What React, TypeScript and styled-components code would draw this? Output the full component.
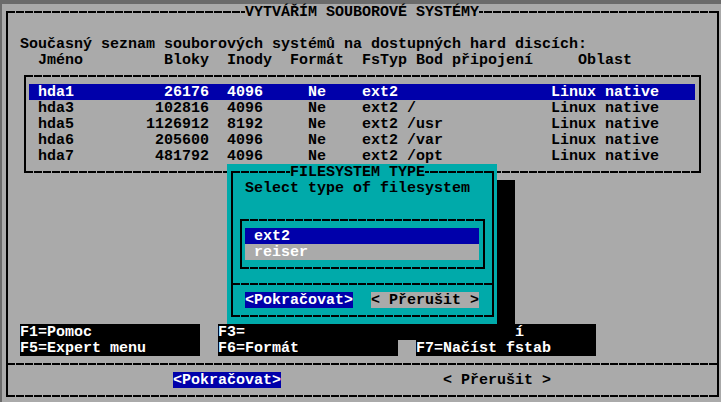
import React from "react";
import styled, { createGlobalStyle, css } from "styled-components";

const GlobalStyle = createGlobalStyle`
  html, body { margin: 0; padding: 0; background: #6b6b6b; overflow: hidden; }
  #root { width: 721px; height: 402px; overflow: hidden; }
`;

type Pos = { $c: number; $r: number; $w?: number; $h?: number };

const placed = css<Pos>`
  position: relative;
  grid-column: ${(p) => p.$c + 1} / span ${(p) => p.$w ?? 1};
  grid-row: ${(p) => p.$r + 1} / span ${(p) => p.$h ?? 1};
`;

const subgrid = css<Pos>`
  display: grid;
  grid-template-columns: repeat(${(p) => p.$w ?? 1}, 9px);
  grid-template-rows: repeat(${(p) => p.$h ?? 1}, 16px);
`;

const dash = "repeating-linear-gradient(90deg, transparent 0 1px, #000 1px 9px)";
const solid = "linear-gradient(#000, #000)";

const boxLines = css`
  &::before {
    content: "";
    position: absolute;
    top: 7px;
    bottom: 7px;
    left: 4px;
    right: 3px;
    pointer-events: none;
    background:
      ${solid} left top / 2px 100% no-repeat,
      ${solid} right top / 2px 100% no-repeat,
      ${dash} left top / 100% 2px no-repeat,
      ${dash} left bottom / 100% 2px no-repeat;
  }
`;

const Viewport = styled.main`
  width: 721px;
  height: 402px;
  box-sizing: border-box;
  padding: 4px 0 0 2px;
  overflow: hidden;
  background: #6b6b6b;
`;

const Screen = styled.div`
  position: relative;
  display: grid;
  grid-template-columns: repeat(80, 9px);
  grid-template-rows: repeat(25, 16px);
  width: 720px;
  height: 400px;
  background: #aaaaaa;
  color: #000;
  font-family: "Liberation Mono", "DejaVu Sans Mono", monospace;
  font-weight: 700;
  font-size: 15px;
  line-height: 18px;
  white-space: pre;
  ${boxLines}
`;

const Heading = styled.h1<Pos>`
  ${placed}
  margin: 0;
  font: inherit;
  background: inherit;
`;

const Caption = styled.div<Pos & { $light?: boolean }>`
  ${placed}
  color: ${(p) => (p.$light ? "#ffffff" : "#000000")};
`;

const ListBox = styled.div<Pos>`
  ${placed}
  ${subgrid}
  ${boxLines}
`;

const TableRow = styled.div<Pos & { $selected?: boolean }>`
  ${placed}
  display: grid;
  grid-template-columns: 108px 63px 81px 72px 45px 144px 144px;
  padding-left: 9px;
  background: ${(p) => (p.$selected ? "#0000aa" : "transparent")};
  color: ${(p) => (p.$selected ? "#ffffff" : "#000000")};
`;

const Field = styled.span<{ $right?: boolean; $pad?: number }>`
  display: block;
  text-align: ${(p) => (p.$right ? "right" : "left")};
  padding-left: ${(p) => (p.$pad ?? 0) * 9}px;
  overflow: visible;
`;

const Rule = styled.div<Pos>`
  ${placed}
  &::before {
    content: "";
    position: absolute;
    top: 7px;
    left: 4px;
    right: 3px;
    height: 2px;
    background: ${dash};
  }
`;

const Button = styled.button<Pos & { $focused?: boolean; $plain?: boolean }>`
  ${placed}
  margin: 0;
  padding: 0;
  border: 0;
  font: inherit;
  white-space: pre;
  text-align: left;
  background: ${(p) => (p.$focused ? "#0000aa" : p.$plain ? "transparent" : "#aaaaaa")};
  color: ${(p) => (p.$focused ? "#ffffff" : "#000000")};
`;

const KeyBar = styled.div<Pos>`
  ${placed}
  ${subgrid}
  background: #000;
  color: #fff;
`;

const KeyGap = styled.div<Pos>`
  ${placed}
  background: #aaaaaa;
`;

const Shadow = styled.div<Pos>`
  ${placed}
  background: #000;
`;

const Dialog = styled.section<Pos>`
  ${placed}
  ${subgrid}
  background: #00aaaa;
  ${boxLines}
`;

const Option = styled.div<Pos & { $selected?: boolean }>`
  ${placed}
  padding-left: 9px;
  background: ${(p) => (p.$selected ? "#0000aa" : "#aaaaaa")};
  color: #ffffff;
`;

type Part = { name: string; blocks: string; inodes: string; fs: string; mount: string };

const parts: Part[] = [
  { name: "hda1", blocks: "26176", inodes: "4096", fs: "ext2", mount: "" },
  { name: "hda3", blocks: "102816", inodes: "4096", fs: "ext2", mount: "/" },
  { name: "hda5", blocks: "1126912", inodes: "8192", fs: "ext2", mount: "/usr" },
  { name: "hda6", blocks: "205600", inodes: "4096", fs: "ext2", mount: "/var" },
  { name: "hda7", blocks: "481792", inodes: "4096", fs: "ext2", mount: "/opt" },
];

const T = (s: string) => s.length;

export default function App() {
  const title = "VYTVÁŘÍM SOUBOROVÉ SYSTÉMY";
  const intro = "Současný seznam souborových systémů na dostupných hard discích:";
  return (
    <>
      <GlobalStyle />
      <Viewport>
        <Screen>
          <Heading $c={27} $r={0} $w={T(title)}>{title}</Heading>
          <Caption $c={2} $r={2} $w={T(intro)}>{intro}</Caption>

          <TableRow $c={3} $r={3} $w={74}>
            <Field>Jméno</Field>
            <Field $right>Bloky</Field>
            <Field $pad={2}>Inody</Field>
            <Field>Formát</Field>
            <Field>FsTyp</Field>
            <Field $pad={1}>Bod připojení</Field>
            <Field $pad={3}>Oblast</Field>
          </TableRow>

          <ListBox $c={2} $r={4} $w={76} $h={7}>
            {parts.map((p, i) => (
              <TableRow key={p.name} $c={1} $r={i + 1} $w={74} $selected={i === 0}>
                <Field>{p.name}</Field>
                <Field $right>{p.blocks}</Field>
                <Field $pad={2}>{p.inodes}</Field>
                <Field $pad={2}>Ne</Field>
                <Field>{p.fs}</Field>
                <Field>{p.mount}</Field>
                <Field>Linux native</Field>
              </TableRow>
            ))}
          </ListBox>

          <KeyBar $c={2} $r={20} $w={20} $h={2}>
            <Caption $light $c={0} $r={0} $w={8}>F1=Pomoc</Caption>
            <Caption $light $c={0} $r={1} $w={14}>F5=Expert menu</Caption>
          </KeyBar>
          <KeyBar $c={24} $r={20} $w={42} $h={2}>
            <Caption $light $c={0} $r={0} $w={3}>F3=</Caption>
            <Caption $light $c={33} $r={0} $w={1}>í</Caption>
            <Caption $light $c={0} $r={1} $w={9}>F6=Formát</Caption>
            <KeyGap $c={20} $r={1} $w={2} />
            <Caption $light $c={22} $r={1} $w={15}>F7=Načíst fstab</Caption>
          </KeyBar>

          <Rule $c={0} $r={22} $w={80} />
          <Button $c={19} $r={23} $w={12} $focused>{"<Pokračovat>"}</Button>
          <Button $c={49} $r={23} $w={12} $plain>{"< Přerušit >"}</Button>

          <Shadow $c={55} $r={11} $w={2} $h={9} />
          <Dialog $c={25} $r={10} $w={30} $h={10}>
            <Heading $c={7} $r={0} $w={15}>FILESYSTEM TYPE</Heading>
            <Caption $c={2} $r={1} $w={25}>Select type of filesystem</Caption>
            <ListBox $c={1} $r={3} $w={28} $h={4}>
              <Option $c={1} $r={1} $w={26} $selected>ext2</Option>
              <Option $c={1} $r={2} $w={26}>reiser</Option>
            </ListBox>
            <Rule $c={0} $r={7} $w={30} />
            <Button $c={2} $r={8} $w={12} $focused>{"<Pokračovat>"}</Button>
            <Button $c={16} $r={8} $w={12}>{"< Přerušit >"}</Button>
          </Dialog>
        </Screen>
      </Viewport>
    </>
  );
}
